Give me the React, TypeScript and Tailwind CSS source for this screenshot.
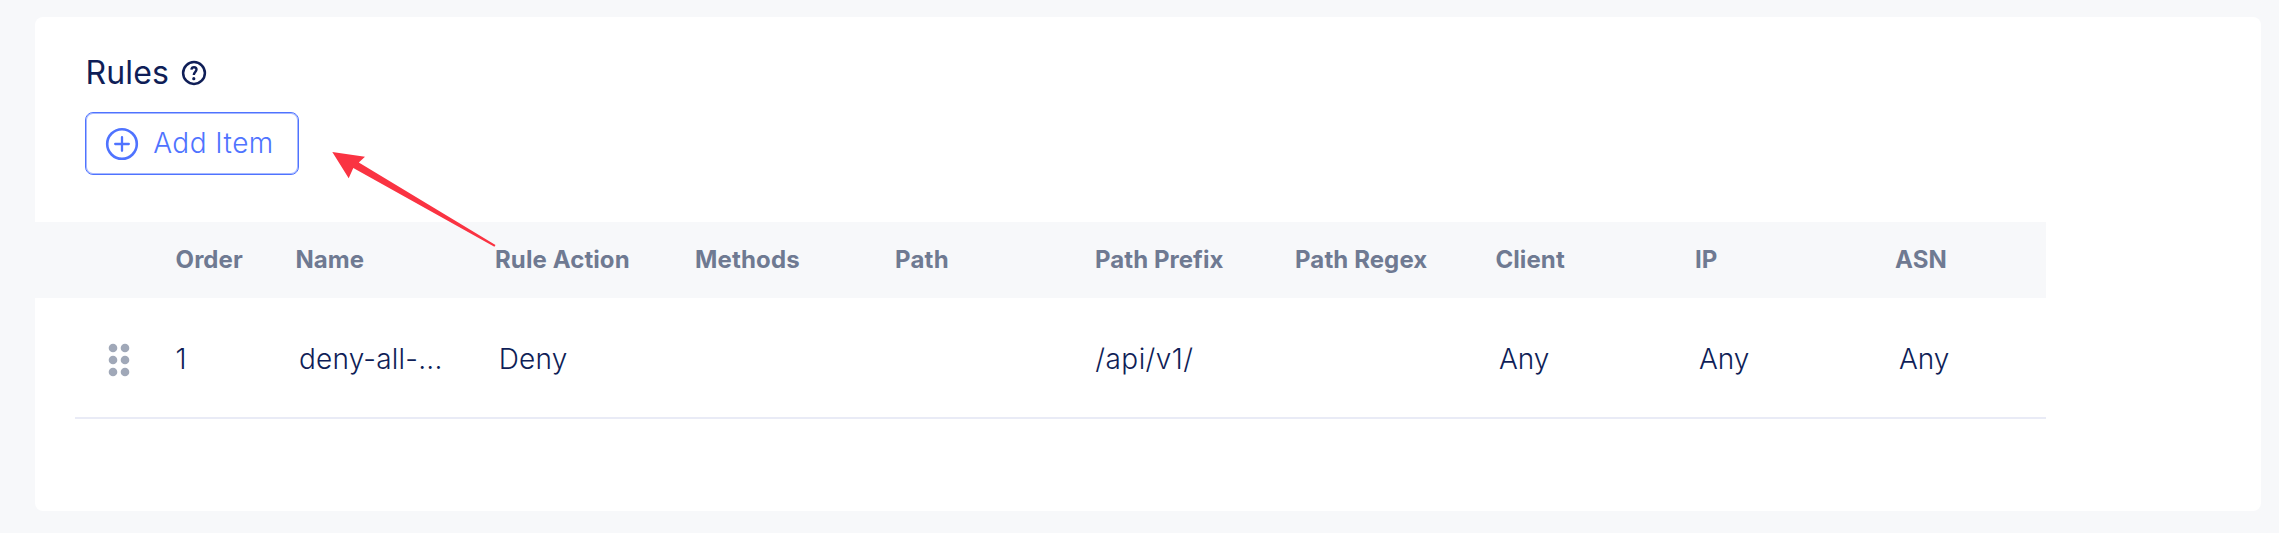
import type { ReactNode } from "react";

type Column = { label: string; tracking: string; value?: ReactNode };

const columns: Column[] = [
  { label: "Order", tracking: "pl-[0.6px] tracking-[0.05px]", value: <span className="pl-[0.6px]">1</span> },
  { label: "Name", tracking: "pl-[0.5px] tracking-[0.05px]", value: <span className="pl-1 tracking-[0.2px]">deny-all-...</span> },
  { label: "Rule Action", tracking: "tracking-[0.1px]", value: <span className="pl-[3.8px] tracking-[0.15px]">Deny</span> },
  { label: "Methods", tracking: "tracking-[0.15px]" },
  { label: "Path", tracking: "tracking-[0.2px]" },
  { label: "Path Prefix", tracking: "tracking-[0.05px]", value: <span className="pl-[0.3px] tracking-[0.45px]">/api/v1/</span> },
  { label: "Path Regex", tracking: "tracking-[0.1px]" },
  { label: "Client", tracking: "pl-[0.4px] tracking-[0.1px]", value: <span className="pl-1 tracking-[-0.1px]">Any</span> },
  { label: "IP", tracking: "tracking-[0.1px]", value: <span className="pl-1 tracking-[-0.1px]">Any</span> },
  { label: "ASN", tracking: "tracking-[0.1px]", value: <span className="pl-1 tracking-[-0.1px]">Any</span> },
];

const gridCols =
  "grid grid-cols-[120px_200px_200px_200px_200px_200px_200px_200px_200px_151px]";

function HelpIcon() {
  return (
    <svg width="26" height="26" viewBox="0 0 26 26" fill="none" stroke="currentColor">
      <circle cx="13" cy="13" r="10.9" strokeWidth="2.5" />
      <path d="M10.4 9.6c.2-1.5 1.2-2.3 2.6-2.3 1.5 0 2.5 1 2.5 2.3 0 2.2-2.7 2.3-2.7 5.4" strokeWidth="2.4" />
      <circle cx="12.8" cy="18.7" r="1.6" fill="currentColor" stroke="none" />
    </svg>
  );
}

function PlusCircleIcon() {
  return (
    <svg width="34" height="34" viewBox="0 0 34 34" fill="none" stroke="currentColor">
      <circle cx="17" cy="17" r="14.8" strokeWidth="2.6" />
      <path d="M17 10.2v13.6M10.2 17h13.6" strokeWidth="2.3" strokeLinecap="round" />
    </svg>
  );
}

function GripIcon() {
  return (
    <svg width="22" height="34" viewBox="0 0 22 34" fill="#a0a8b8">
      {[5, 17].map((x) =>
        [5, 17, 29].map((y) => <circle key={`${x}-${y}`} cx={x} cy={y} r="4.3" />),
      )}
    </svg>
  );
}

export default function App() {
  return (
    <div className="relative h-[533px] w-[2279px] bg-[#f7f8fa] pt-[17px] pl-[35px] font-['Inter',sans-serif]">
      <section className="h-[494px] w-[2226px] rounded-lg bg-white">
        <div className="flex h-[205px] flex-col items-start pt-9 pl-[50px]">
          <div className="flex items-center text-[#0f1e57]">
            <h2 className="pl-[0.4px] text-[32px] leading-[39px] font-normal tracking-[0.2px]">Rules</h2>
            <span className="ml-[12px]">
              <HelpIcon />
            </span>
          </div>
          <button className="mt-5 flex h-[63px] w-[214px] items-center rounded-lg border border-[#4f73ff] pl-[19px] text-[#4f73ff] shadow-[inset_0_0_0_1px_#a7b9ff]">
            <PlusCircleIcon />
            <span className="ml-[14.2px] pb-0.5 text-[28px] leading-[34px] font-light tracking-[0.45px]">Add Item</span>
          </button>
        </div>

        <div className="w-[2011px]">
          <div className="flex h-[76px] items-center bg-[#f7f8fa] pl-[140px]">
            <div className={gridCols}>
              {columns.map((c) => (
                <div key={c.label} className={`text-[24px] leading-[30px] font-bold text-[#6f7a92] ${c.tracking}`}>
                  {c.label}
                </div>
              ))}
            </div>
          </div>
          <div className="ml-10 flex h-[121px] items-center border-b-2 border-[#e9ebf6]">
            <div className="flex w-[100px] pl-[33px] pt-1">
              <GripIcon />
            </div>
            <div className={`${gridCols} pt-0.5 text-[28px] leading-[34px] font-light text-[#0f1e57]`}>
              {columns.map((c) => (
                <div key={c.label}>{c.value}</div>
              ))}
            </div>
          </div>
        </div>
      </section>

      <svg
        className="pointer-events-none absolute top-[148px] left-[328px]"
        width="172"
        height="102"
        viewBox="328 148 172 102"
        fill="#fa3342"
      >
        <path d="M332.3 152 365 156.8 358.8 162.5 495.5 245 494.4 246.8 353.3 168 348.7 178.3Z" />
      </svg>
    </div>
  );
}
